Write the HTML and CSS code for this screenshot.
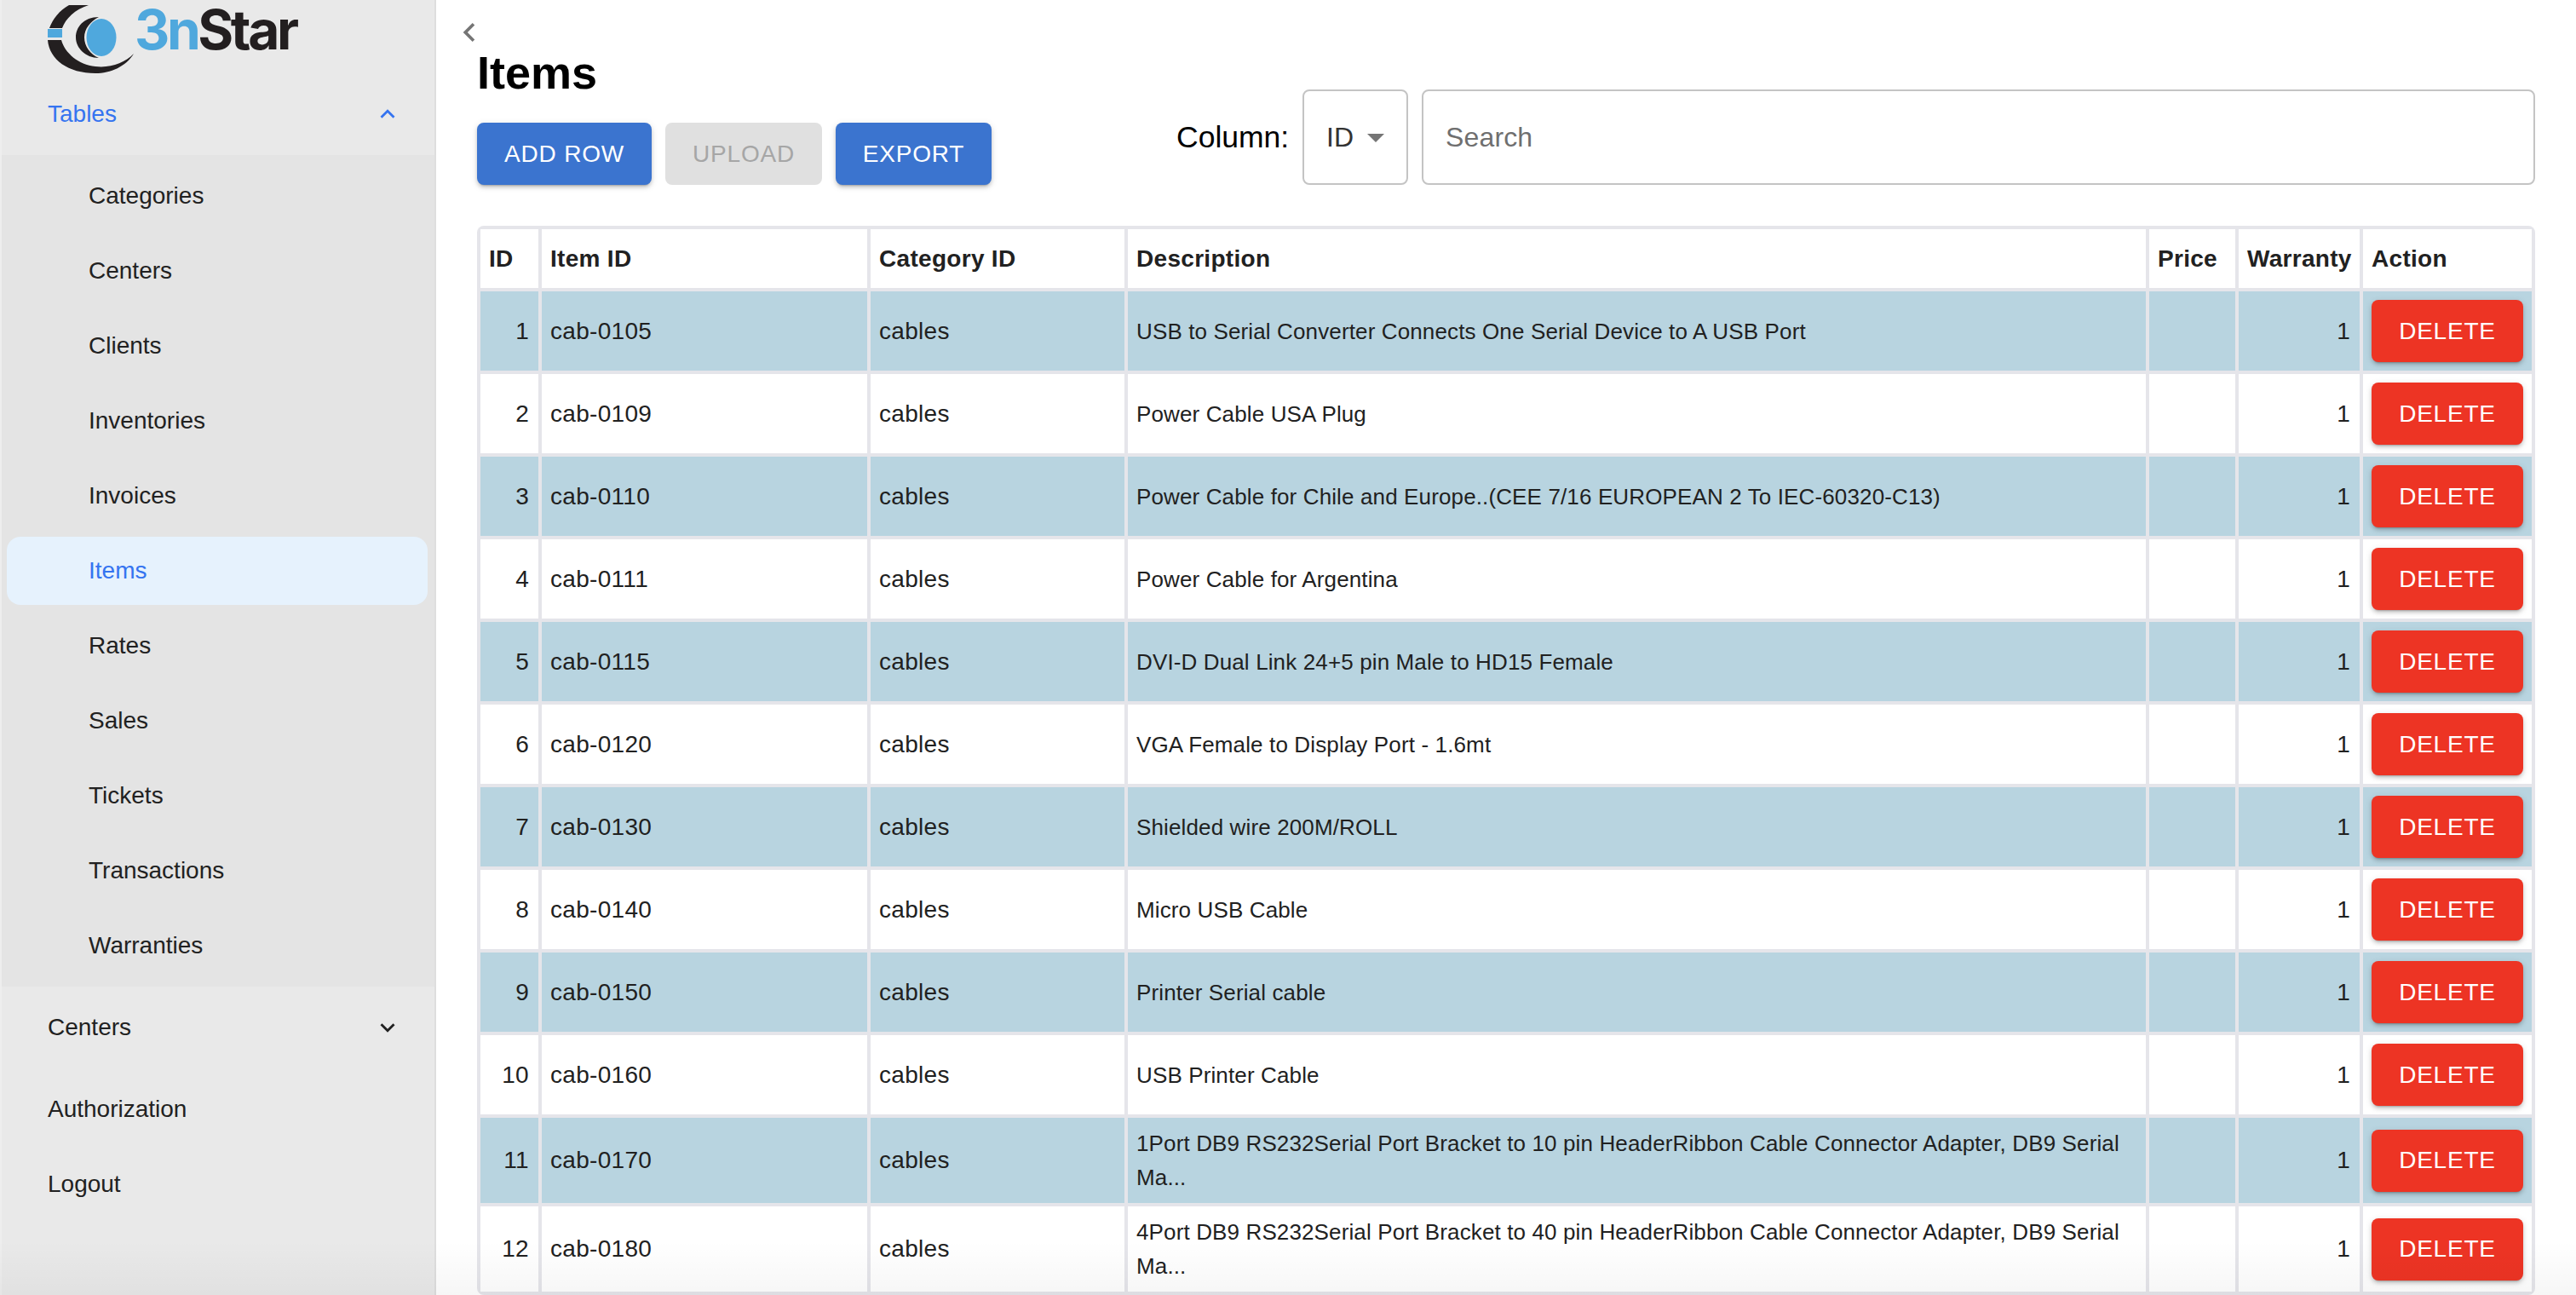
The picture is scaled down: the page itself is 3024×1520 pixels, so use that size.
FILE: index.html
```html
<!DOCTYPE html>
<html lang="en">
<head>
<meta charset="utf-8">
<title>Items</title>
<link rel="stylesheet" href="styles.css">
</head>
<body>
<div class="app">
  <aside class="sidebar">
    <div class="logo">
      <svg class="logo-mark" viewBox="56 6 101 80" width="101" height="80" aria-hidden="true">
        <path class="ink" d="M81 6C70 12 62 22 58 33L73 33C77 22 88 11 104 6Z"/>
        <rect class="sky" x="56" y="34" width="17" height="10"/>
        <path class="ink" d="M56 47L72 47C76 62 92 76 112 78C130 80 146 74 157 63C148 78 130 86 112 86C80 86 58 70 56 47Z"/>
        <path class="ink" d="M116 20C98 20 89 32 89 44C89 56 100 68 116 68C106 64 99 54 99 44C99 34 106 25 116 20Z"/>
        <ellipse class="sky" cx="119" cy="44" rx="17.5" ry="22"/>
      </svg>
      <span class="logo-text"><span class="logo-three">3n</span>Star</span>
    </div>
    <nav>
      <div class="nav-row nav-tables is-active">
        <span>Tables</span>
        <svg class="chev" viewBox="0 0 24 24" aria-hidden="true"><path d="M12 8l-6 6 1.41 1.41L12 10.83l4.59 4.58L18 14z"/></svg>
      </div>
      <div class="submenu">
        <a class="sub-item">Categories</a>
        <a class="sub-item">Centers</a>
        <a class="sub-item">Clients</a>
        <a class="sub-item">Inventories</a>
        <a class="sub-item">Invoices</a>
        <a class="sub-item is-selected">Items</a>
        <a class="sub-item">Rates</a>
        <a class="sub-item">Sales</a>
        <a class="sub-item">Tickets</a>
        <a class="sub-item">Transactions</a>
        <a class="sub-item">Warranties</a>
      </div>
      <div class="nav-row nav-tall">
        <span>Centers</span>
        <svg class="chev" viewBox="0 0 24 24" aria-hidden="true"><path d="M16.59 8.59L12 13.17 7.41 8.59 6 10l6 6 6-6z"/></svg>
      </div>
      <div class="nav-row nav-tall">Authorization</div>
      <div class="nav-row nav-short">Logout</div>
    </nav>
  </aside>

  <main class="main">
    <svg class="back" viewBox="0 0 24 24" aria-hidden="true"><path d="M15.41 7.41L14 6l-6 6 6 6 1.41-1.41L10.83 12z"/></svg>
    <div class="toolbar">
      <div class="toolbar-left">
        <h1 class="title">Items</h1>
        <div class="actions">
          <button class="btn btn-primary btn-add">ADD ROW</button>
          <button class="btn btn-disabled btn-upload">UPLOAD</button>
          <button class="btn btn-primary btn-export">EXPORT</button>
        </div>
      </div>
      <div class="filter">
        <span class="filter-label">Column:</span>
        <div class="select">
          <span>ID</span>
          <svg class="caret" viewBox="0 0 24 24" aria-hidden="true"><path d="M7 10l5 5 5-5z"/></svg>
        </div>
        <input class="search" type="text" placeholder="Search">
      </div>
    </div>

    <table class="grid">
      <colgroup>
        <col class="c-id"><col class="c-item"><col class="c-cat"><col class="c-desc"><col class="c-price"><col class="c-war"><col class="c-act">
      </colgroup>
      <thead>
        <tr><th>ID</th><th>Item ID</th><th>Category ID</th><th>Description</th><th>Price</th><th>Warranty</th><th>Action</th></tr>
      </thead>
      <tbody>
        <tr><td class="num">1</td><td>cab-0105</td><td>cables</td><td class="desc">USB to Serial Converter Connects One Serial Device to A USB Port</td><td></td><td class="num">1</td><td><button class="btn btn-delete">DELETE</button></td></tr>
        <tr><td class="num">2</td><td>cab-0109</td><td>cables</td><td class="desc">Power Cable USA Plug</td><td></td><td class="num">1</td><td><button class="btn btn-delete">DELETE</button></td></tr>
        <tr><td class="num">3</td><td>cab-0110</td><td>cables</td><td class="desc">Power Cable for Chile and Europe..(CEE 7/16 EUROPEAN 2 To IEC-60320-C13)</td><td></td><td class="num">1</td><td><button class="btn btn-delete">DELETE</button></td></tr>
        <tr><td class="num">4</td><td>cab-0111</td><td>cables</td><td class="desc">Power Cable for Argentina</td><td></td><td class="num">1</td><td><button class="btn btn-delete">DELETE</button></td></tr>
        <tr><td class="num">5</td><td>cab-0115</td><td>cables</td><td class="desc">DVI-D Dual Link 24+5 pin Male to HD15 Female</td><td></td><td class="num">1</td><td><button class="btn btn-delete">DELETE</button></td></tr>
        <tr><td class="num">6</td><td>cab-0120</td><td>cables</td><td class="desc">VGA Female to Display Port - 1.6mt</td><td></td><td class="num">1</td><td><button class="btn btn-delete">DELETE</button></td></tr>
        <tr><td class="num">7</td><td>cab-0130</td><td>cables</td><td class="desc">Shielded wire 200M/ROLL</td><td></td><td class="num">1</td><td><button class="btn btn-delete">DELETE</button></td></tr>
        <tr><td class="num">8</td><td>cab-0140</td><td>cables</td><td class="desc">Micro USB Cable</td><td></td><td class="num">1</td><td><button class="btn btn-delete">DELETE</button></td></tr>
        <tr><td class="num">9</td><td>cab-0150</td><td>cables</td><td class="desc">Printer Serial cable</td><td></td><td class="num">1</td><td><button class="btn btn-delete">DELETE</button></td></tr>
        <tr><td class="num">10</td><td>cab-0160</td><td>cables</td><td class="desc">USB Printer Cable</td><td></td><td class="num">1</td><td><button class="btn btn-delete">DELETE</button></td></tr>
        <tr><td class="num">11</td><td>cab-0170</td><td>cables</td><td class="desc">1Port DB9 RS232Serial Port Bracket to 10 pin HeaderRibbon Cable Connector Adapter, DB9 Serial Ma...</td><td></td><td class="num">1</td><td><button class="btn btn-delete">DELETE</button></td></tr>
        <tr><td class="num">12</td><td>cab-0180</td><td>cables</td><td class="desc">4Port DB9 RS232Serial Port Bracket to 40 pin HeaderRibbon Cable Connector Adapter, DB9 Serial Ma...</td><td></td><td class="num">1</td><td><button class="btn btn-delete">DELETE</button></td></tr>
      </tbody>
    </table>
  </main>
</div>
<div class="fade"></div>
</body>
</html>
```
FILE: styles.css
```css
* { box-sizing: border-box; }
html, body { margin: 0; height: 1520px; overflow: hidden; background: #fff; }
body { font-family: "Liberation Sans", Arial, sans-serif; color: #212121; position: relative; }

.app { display: flex; height: 1520px; }

/* Sidebar */
.sidebar {
  flex: none;
  width: 512px;
  height: 100%;
  background: #e9e9e9;
  border-left: 2px solid #eeeeee;
  border-right: 2px solid #dedede;
  font-size: 28px;
}
.logo {
  height: 84px;
  padding: 6px 0 0 54px;
  display: flex;
  align-items: flex-start;
  gap: 1px;
}
.logo-mark { flex: none; filter: blur(0.6px); }
.ink { fill: #231f20; }
.sky { fill: #4fa8dd; }
.logo-text {
  margin-top: -1px;
  font-family: Inter, "Liberation Sans", sans-serif;
  font-weight: 700;
  font-size: 64px;
  line-height: 60px;
  letter-spacing: -3.4px;
  color: #231f20;
  filter: blur(0.5px);
}
.logo-three { color: #4fa8dd; }

.nav-row {
  display: flex;
  align-items: center;
  justify-content: space-between;
  padding: 0 38px 0 54px;
  color: #212121;
}
.nav-tables { height: 98px; padding-top: 2px; }
.nav-tall { height: 96px; }
.nav-short { height: 80px; }
.is-active { color: #3574f0; }
.chev { width: 34px; height: 34px; fill: #212121; flex: none; }
.is-active .chev { fill: #3574f0; }

.submenu {
  background: #e4e4e4;
  padding: 8px 8px 8px 6px;
  display: flex;
  flex-direction: column;
  gap: 8px;
}
.sub-item {
  height: 80px;
  display: flex;
  align-items: center;
  padding-left: 96px;
  border-radius: 16px;
  color: #212121;
}
.sub-item.is-selected { background: #e6f2fd; color: #3574f0; }

/* Main */
.main { flex: 1; min-width: 0; padding: 16px 48px 0; position: relative; }
.back { display: block; width: 44px; height: 44px; margin-left: -31px; fill: #757575; }

.toolbar { display: flex; align-items: flex-end; }
.toolbar-left { flex: none; }
.title {
  margin: 0 0 33px;
  font-size: 54px;
  line-height: 51px;
  font-weight: 700;
  color: #000;
}
.actions { display: flex; gap: 16px; }

.btn {
  border: 0;
  border-radius: 8px;
  height: 73px;
  font-family: inherit;
  font-size: 28px;
  letter-spacing: 0.8px;
  padding: 0;
  text-align: center;
}
.btn-add { width: 205px; }
.btn-upload { width: 184px; }
.btn-export { width: 183px; }
.btn-primary {
  background: #3b74cf;
  color: #fff;
  box-shadow: 0 4px 2px -3px rgba(0,0,0,.2), 0 3px 4px rgba(0,0,0,.14), 0 2px 8px rgba(0,0,0,.12);
}
.btn-disabled { background: #e0e0e0; color: #a6a6a6; }
.btn-delete {
  display: block;
  width: 178px;
  background: #ed3424;
  color: #fff;
  box-shadow: 0 4px 2px -3px rgba(0,0,0,.2), 0 3px 4px rgba(0,0,0,.14), 0 2px 8px rgba(0,0,0,.12);
}

.filter {
  margin-left: auto;
  width: 1595px;
  height: 112px;
  display: flex;
  align-items: stretch;
  gap: 16px;
}
.filter-label {
  flex: none;
  width: 132px;
  align-self: center;
  font-size: 35.5px;
  color: #000;
}
.select {
  flex: none;
  width: 124px;
  border: 2px solid #c4c4c4;
  border-radius: 8px;
  padding-left: 26px;
  display: flex;
  align-items: center;
  font-size: 32px;
  color: #333;
}
.caret { width: 48px; height: 48px; margin-left: 2px; flex: none; fill: #757575; }
.search {
  flex: 1;
  min-width: 0;
  border: 2px solid #c4c4c4;
  border-radius: 8px;
  padding: 0 26px;
  font-family: inherit;
  font-size: 32px;
  letter-spacing: 0.15px;
  color: #333;
  background: #fff;
  outline: none;
}
.search::placeholder { color: #6f6f6f; opacity: 1; }

/* Table */
.grid {
  width: 2416px;
  margin-top: 48px;
  table-layout: fixed;
  border-collapse: separate;
  border-spacing: 4px;
  background: #e5e5ea;
  border-radius: 8px;
  font-size: 28px;
  letter-spacing: 0.3px;
  line-height: 40px;
}
.c-id { width: 68px; }
.c-item { width: 382px; }
.c-cat { width: 298px; }
.c-desc { width: 1195px; }
.c-price { width: 101px; }
.c-war { width: 142px; }
.c-act { width: 198px; }
th, td { padding: 10px; background: #fff; color: #212121; text-align: left; vertical-align: middle; }
th { height: 69px; padding-top: 0; padding-bottom: 0; font-weight: 700; }
tbody tr:nth-child(odd) td { background: #b8d4e0; }
td.num { text-align: right; padding-right: 11px; }
td.desc { font-size: 26px; letter-spacing: 0.13px; }

/* Soft scroll fade along the bottom edge of the window */
.fade {
  position: absolute;
  left: 0;
  right: 0;
  bottom: 0;
  height: 64px;
  background: linear-gradient(to bottom, rgba(0,0,0,0), rgba(0,0,0,.035));
  pointer-events: none;
}
```
